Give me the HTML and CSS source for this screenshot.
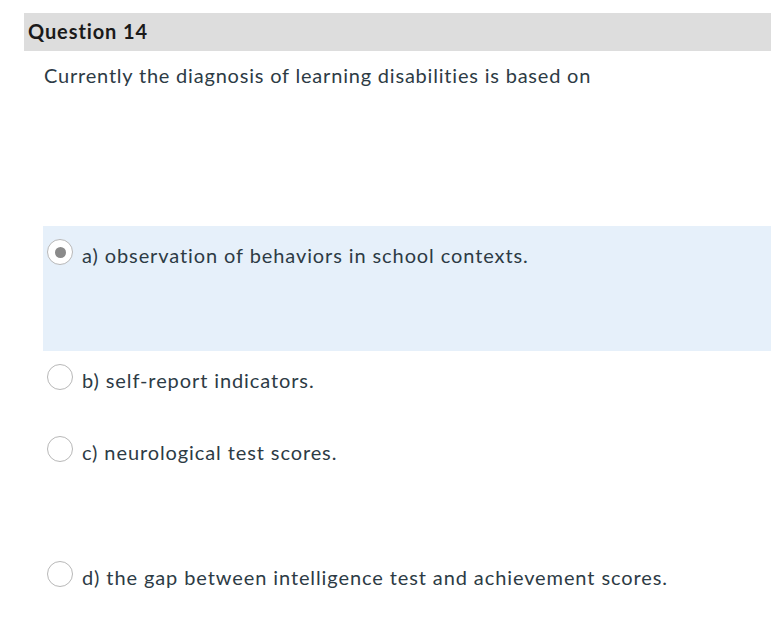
FILE: index.html
```html
<!DOCTYPE html>
<html>
<head>
<meta charset="utf-8">
<link rel="stylesheet" href="styles.css">
</head>
<body>
<div class="question">
  <div class="q-header">Question 14</div>
  <div class="q-text">Currently the diagnosis of learning disabilities is based on</div>
  <div class="answers">
    <label class="answer selected tall">
      <span class="radio checked"></span>
      <span class="answer-text">a) observation of behaviors in school contexts.</span>
    </label>
    <label class="answer">
      <span class="radio"></span>
      <span class="answer-text">b) self-report indicators.</span>
    </label>
    <label class="answer tall">
      <span class="radio"></span>
      <span class="answer-text">c) neurological test scores.</span>
    </label>
    <label class="answer">
      <span class="radio"></span>
      <span class="answer-text">d) the gap between intelligence test and achievement scores.</span>
    </label>
  </div>
</div>
</body>
</html>
```
FILE: styles.css
```css
html, body {
  margin: 0;
  padding: 0;
  background: #ffffff;
}
body {
  font-family: Lato, "Open Sans", sans-serif;
  color: #2d3b45;
  font-variant-ligatures: none;
}
.question {
  padding: 13px 0 0 24px;
}
.q-header {
  background: #dddddd;
  height: 38px;
  line-height: 36px;
  padding-left: 4px;
  font-weight: 700;
  font-size: 20px;
  letter-spacing: 0.9px;
  color: #1a1a1a;
}
.q-text {
  padding: 12px 0 0 20px;
  font-size: 20px;
  letter-spacing: 0.8px;
  line-height: 24px;
  height: 163px;
}
.answers {
  display: flex;
  flex-direction: column;
  margin-left: 19px;
}
.answer {
  display: flex;
  align-items: flex-start;
  height: 72px;
  padding: 13px 0 0 4px;
  box-sizing: border-box;
  gap: 9px;
}
.answer.tall {
  height: 125px;
}
.answer.selected {
  background: #e6f0fa;
}
.radio {
  width: 26px;
  height: 26px;
  box-sizing: border-box;
  border: 1px solid #b8b8b8;
  border-radius: 50%;
  background: #ffffff;
  display: flex;
  align-items: center;
  justify-content: center;
  flex: none;
}
.radio.checked::after {
  content: "";
  width: 11px;
  height: 11px;
  border-radius: 50%;
  background: #8a8a8a;
}
.answer-text {
  font-size: 20px;
  letter-spacing: 0.9px;
  line-height: 26px;
  margin-top: 3px;
}
```
